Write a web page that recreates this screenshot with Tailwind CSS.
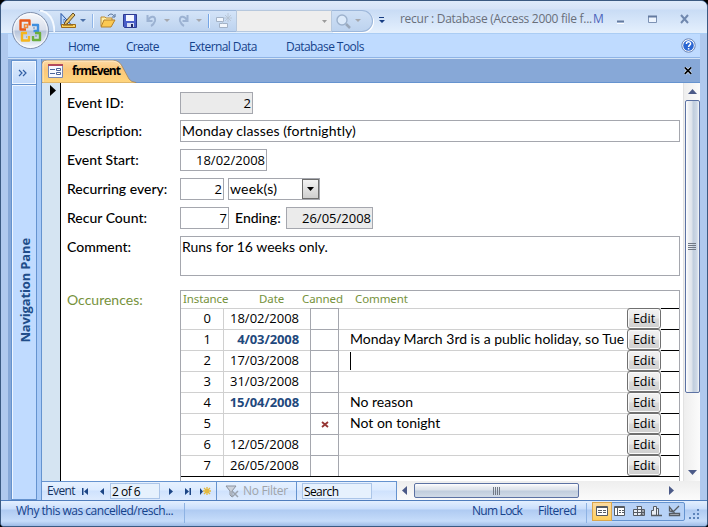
<!DOCTYPE html>
<html lang="en">
<head>
<meta charset="utf-8">
<title>recur : Database</title>
<script src="https://cdn.jsdelivr.net/npm/@tailwindcss/browser@4"></script>
</head>
<body class="bg-black overflow-hidden">
<div class="relative w-[708px] h-[527px] flex flex-col overflow-hidden rounded-t-[7px] rounded-b-[4px] border-x border-y border-[#3b5a82] bg-[#b0c9ee] font-['Open_Sans','Noto_Sans',sans-serif] text-[12px] whitespace-nowrap">

  <!-- Title bar -->
  <header class="h-[33px] shrink-0 flex items-start border-b border-[#abcdf4] bg-[linear-gradient(#dfebfb_0,#d5e3f8_8px,#c9dcf5_9px,#e3effd_31px)]">
    <div class="ml-[38px] mt-[9px] w-[164px] h-[22px] flex items-center border-y border-[#9db7da] bg-linear-to-b from-[#d4e4f8] to-[#bdd3ef] pl-[21px]">
      <svg class="w-[142px] h-[20px]" viewBox="60 11 142 20" fill="none">
        <path d="M61 13.500v12l10-1z" fill="#b9d6fa" stroke="#2452a5"/><path d="M64 19v4h4z" fill="#fff" stroke="#2452a5" stroke-width=".7"/>
        <path d="M65 22 73 13l2 2-8 9-3 1z" fill="#e9c469" stroke="#604b27"/>
        <path d="M61.500 24.500h14v3h-14z" fill="#ffd35a" stroke="#9a6a1d"/><path d="M64 25v1m2-1v1m2-1v1m2-1v1m2-1v1" stroke="#6e4a10"/>
        <path d="M80 19h6l-3 3z" fill="#4b70a8"/><path d="M92.500 14v14" stroke="#8fb5e8"/><path d="M93.500 14v14" stroke="#eef6ff"/>
        <path d="M101 26V17h4l1 1h6v3" fill="#fff0a8" stroke="#c08a2e"/><path d="M101 27l3-7h11l-4 7z" fill="#fbc952" stroke="#b5802a"/><path d="M108 16c2-3 5-2 6 0m1-2v3h-3" stroke="#4d6a94"/>
        <path d="M123.500 14.500h13v13h-12l-1-1z" fill="#4a5fc8" stroke="#2c3990"/><path d="M126 15h8v6h-8z" fill="#f3f6ff"/><path d="M127 23h7v4h-7z" fill="#d7def5"/><path d="M131 24h2v3h-2z" fill="#222b66"/>
        <path d="M147.500 15v6h5M148 20c3-5 8-4 7 1-1 3-2 4-4 5" stroke="#9cb2d2" stroke-width="2"/><path d="M164 19h6l-3 3z" fill="#a5a8ae"/>
        <path d="M187.500 15v6h-5M187 20c-3-5-8-4-7 1 1 3 2 4 4 5" stroke="#9cb2d2" stroke-width="2"/><path d="M196 19h6l-3 3z" fill="#a5a8ae"/>
      </svg>
    </div>
    <div class="mt-[9px] w-[33px] h-[22px] border-y border-[#9db7da] bg-linear-to-b from-[#d4e4f8] to-[#bdd3ef]">
      <svg class="w-[32px] h-[20px]" viewBox="203 11 32 20" fill="none"><path d="M208.500 14v14" stroke="#75a5e5"/><path d="M209.500 14v14" stroke="#eef6ff"/><path d="M216.500 17.500h7v4h-7zM219.500 23.500h8v4h-8z" fill="#f2f7fd" stroke="#a3b2c6"/><path d="M222.500 21v3M228 13v9m-4-4h8m-7-3 6 6m0-6-6 6" stroke="#b5c1d0" stroke-width=".8"/></svg>
    </div>
    <div class="mt-[9px] w-[96px] h-[22px] flex items-center justify-end border border-[#b7c8dd] bg-[#eeeeee] pr-[4px]"><svg class="w-[5px] h-[3px]" viewBox="0 0 5 3"><path d="M0 0h5L2.500 3z" fill="#9b9b9b"/></svg></div>
    <div class="mt-[9px] w-[41px] h-[22px] rounded-r-full border-y border-r border-[#9db7da] bg-linear-to-b from-[#cfe0f5] to-[#bdd3ef] shadow-[1px_1px_0_#fff]">
      <svg class="w-[36px] h-[20px]" viewBox="332 11 36 20" fill="none"><circle cx="342" cy="20" r="5" fill="#dceafa" stroke="#9db2cd" stroke-width="1.400"/><path d="m346 24 4 4" stroke="#9aa8ba" stroke-width="2.500"/><path d="M355 19h6l-3 3z" fill="#a5a8ae"/></svg>
    </div>
    <svg class="ml-[6px] mt-[16px] w-[6px] h-[7px]" viewBox="0 0 6 7"><path d="M0 0h5v1H0zM0 3h6L3 6z" fill="#183e83"/></svg>
    <div class="ml-[15px] mt-[10px] w-[191px] h-[16px] leading-[16px] text-[12px] tracking-[-0.28px] text-[#696f7a]">recur : Database (Access 2000 file f...</div>
    <div class="mt-[10px] ml-[2px] w-[12px] leading-[16px] text-[12px] text-[#4c64bb] overflow-hidden">M</div>
    <svg class="ml-[11px] mt-[12px] w-[74px] h-[12px]" viewBox="616 13 74 12" fill="none"><path d="M617 21.500h7" stroke="#647ba0" stroke-width="2"/><path d="M617 23.500h7" stroke="#fff"/><path d="M648.500 16.500h8v6h-8z" fill="#eef5fe" stroke="#7d92b4"/><path d="M648 16.500h9" stroke="#647ba0" stroke-width="2"/><path d="m681 15 7 8m0-8-7 8" stroke="#7189af" stroke-width="2"/></svg>
  </header>

  <!-- Ribbon tabs -->
  <nav class="h-[24px] shrink-0 ml-[7px] mr-[7px] flex items-center bg-[#bfdbff] border-b border-[#8fb4e5] text-[12px] leading-[16px] text-[#15428b] relative">
    <span class="ml-[60px] mt-[2px] w-[58px] tracking-[-0.7px]">Home</span>
    <span class="mt-[2px] w-[63px] tracking-[-0.7px]">Create</span>
    <span class="mt-[2px] w-[97px] tracking-[-0.58px]">External Data</span>
    <span class="mt-[2px] tracking-[-0.56px]">Database Tools</span>
    <svg class="ml-auto mr-[4px] w-[15px] h-[15px]" viewBox="0 0 15 15"><circle cx="7.500" cy="7.500" r="6.700" fill="#fff" stroke="#6782b4"/><circle cx="7.500" cy="7.500" r="5.300" fill="#2b66d2"/><path d="M5.400 6c0-3 4.200-2.800 4.200-.3 0 1.400-2 1.500-2 3.200M7.600 10v1.600" fill="none" stroke="#fff" stroke-width="1.500"/></svg>
  </nav>

  <!-- Workspace -->
  <div class="flex h-[442px] shrink-0 ml-[7px] mr-[7px] bg-[#87a8d7] border-t border-[#d3e3f6]">
    <aside class="ml-[3px] w-[26px] shrink-0 mt-px border border-[#6593cf] bg-[#c0dbff] flex flex-col">
      <div class="h-[24px] flex items-center justify-center border-b border-[#6593cf] bg-linear-to-b from-[#dceafc] to-[#c2dafb] shadow-[inset_0_0_0_1px_#eff6ff]">
        <svg class="w-[9px] h-[8px] mr-[3px]" viewBox="0 0 9 8"><path d="m1 1 3 3-3 3M5 1l3 3-3 3" fill="none" stroke="#3360a5" stroke-width="1.200"/></svg>
      </div>
      <div class="flex-1 flex items-center justify-center border-l border-t border-[#eff6ff]">
        <span class="[writing-mode:vertical-rl] rotate-180 text-[13px] leading-[18px] font-bold tracking-[-0.15px] text-[#204d89] mb-[4px]">Navigation Pane</span>
      </div>
    </aside>
    <div class="w-[4px] shrink-0 bg-[#a9cbf8]"></div>
    <section class="w-[659px] flex flex-col border-l border-[#6593cf]">
      <div class="h-[24px] shrink-0 flex border-b border-[#6593cf]">
        <div class="relative w-[96px] h-[24px]">
          <svg class="absolute left-0 top-0 w-[96px] h-[24px]" viewBox="0 0 96 24"><defs><linearGradient id="tab" x2="0" y2="1"><stop offset="0" stop-color="#fcd9a3"/><stop offset=".4" stop-color="#fbc77b"/><stop offset="1" stop-color="#ffd67c"/></linearGradient></defs><path d="M0 24V5Q0 1.500 4 1.500H71Q77 1.500 80 7L87 20Q89 23 94 23.500V24z" fill="url(#tab)" stroke="#a37f50" stroke-width=".7"/><path d="M1 23V5q0-3 4-3H71q5 0 8 5" fill="none" stroke="#ffe9c6"/>
            <path d="M6.500 5.500h14v13h-14z" fill="#f7f9ff" stroke="#7987b2"/><path d="M6 6h15" stroke="#b24a5d" stroke-width="2"/><path d="M8 10.500h5m-5 4h5" stroke="#4d659b"/><path d="M14.500 9.500h4v2h-4zM14.500 13.500h4v2h-4z" fill="#fff" stroke="#4d659b"/></svg>
          <span class="absolute left-[30px] top-[4px] text-[12px] leading-[16px] font-bold tracking-[-0.95px] text-black">frmEvent</span>
        </div>
        <svg class="ml-auto mr-[8px] mt-[8px] w-[8px] h-[8px]" viewBox="0 0 8 8"><path d="m.8.500 6.400 6.400m0-6.400L.8 6.900" stroke="#d8e5f7" stroke-width="3"/><path d="m.8.500 6.400 6.400m0-6.400L.8 6.900" stroke="#000" stroke-width="1.700"/></svg>
      </div>

      <div class="h-[398px] shrink-0 flex bg-white">
        <div class="w-[19px] shrink-0 border-r border-black bg-[#d5e4f2] pl-[8px] pt-[2px]"><svg class="w-[6px] h-[11px]" viewBox="0 0 6 11"><path d="M0 0l6 5.500L0 11z"/></svg></div>

        <!-- Form -->
        <main class="w-[622px] pl-[6px] pt-[9px] overflow-hidden font-['Lato','Noto_Sans',sans-serif] text-[14px] leading-[20px] text-black">
          <div class="flex h-[22px] mb-[6px]"><span class="w-[113px] leading-[22px] font-medium">Event ID:</span><span class="w-[73px] border border-[#a5a7ae] bg-[#ebebeb] text-right pr-[1px] font-['Open_Sans',sans-serif] text-[13px]">2</span></div>
          <div class="flex h-[22px] mb-[7px]"><span class="w-[113px] leading-[22px] font-medium">Description:</span><span class="w-[500px] border border-[#a5a7ae] pl-[1px] tracking-[0.1px]">Monday classes (fortnightly)</span></div>
          <div class="flex h-[22px] mb-[7px]"><span class="w-[113px] leading-[22px] font-medium">Event Start:</span><span class="w-[87px] border border-[#a5a7ae] text-right pr-[1px] font-['Open_Sans',sans-serif] text-[13px]">18/02/2008</span></div>
          <div class="flex h-[22px] mb-[7px]"><span class="w-[113px] leading-[22px] font-medium">Recurring every:</span><span class="w-[44px] mr-[4px] border border-[#a5a7ae] text-right pr-[1px] font-['Open_Sans',sans-serif] text-[13px]">2</span>
            <span class="w-[92px] border border-[#a5a7ae] pl-[1px] flex justify-between"><span class="tracking-[0.2px]">week(s)</span><span class="w-[17px] h-[20px] border border-[#6d6d6d] bg-linear-to-b from-[#f3f3f3] to-[#cfcfcf] flex items-center justify-center"><svg class="w-[7px] h-[4px]" viewBox="0 0 7 4"><path d="M0 0h7L3.500 4z"/></svg></span></span></div>
          <div class="flex h-[22px] mb-[7px]"><span class="w-[113px] leading-[22px] font-medium">Recur Count:</span><span class="w-[49px] border border-[#a5a7ae] text-right pr-[1px] font-['Open_Sans',sans-serif] text-[13px]">7</span><span class="w-[57px] pl-[6px] leading-[22px] font-medium">Ending:</span><span class="w-[87px] border border-[#a5a7ae] bg-[#ebebeb] text-right pr-[1px] font-['Open_Sans',sans-serif] text-[13px]">26/05/2008</span></div>
          <div class="flex h-[40px] mb-[14px]"><span class="w-[113px] leading-[22px] font-medium">Comment:</span><span class="w-[500px] border border-[#a5a7ae] pl-[1px]">Runs for 16 weeks only.</span></div>
          <div class="flex h-[192px]"><span class="w-[113px] text-[#76923c]">Occurences:</span>
            <div class="w-[500px] border-x border-t border-[#a5a7ae]">
              <div class="h-[17px] flex pl-[2px] text-[11.500px] leading-[15px] tracking-[-0.1px] text-[#76923c] font-['Noto_Sans',sans-serif]"><span class="w-[76px]">Instance</span><span class="w-[43px]">Date</span><span class="w-[53px]">Canned</span><span>Comment</span></div>
              <div id="rows" class="border-b border-black"></div>
            </div>
          </div>
        </main>

        <!-- Vertical scroll bar -->
        <div class="w-[17px] shrink-0 border-l border-[#e2e2e2] bg-linear-to-r from-[#eeeeee] to-[#fbfbfb] flex flex-col items-center">
          <svg class="mt-[6px] w-[9px] h-[5px]" viewBox="0 0 9 5"><path d="M4.500 0 9 5H0z" fill="#4b5a88"/></svg>
          <div class="mt-[6px] h-[293px] w-[15px] rounded-[2px] border border-[#5c72a3] bg-[linear-gradient(90deg,#fff_0,#e9ecf1_3px,#dde3eb_6px,#c0cddd_7px,#cfd9e6_11px,#f7f9fb_13px)] flex items-center justify-center"><svg class="w-[8px] h-[8px]" viewBox="0 0 8 8"><path d="M0 .5h8m-8 2h8m-8 2h8m-8 2h8" stroke="#717985" stroke-width="1"/></svg></div>
          <svg class="mt-auto mb-[6px] w-[9px] h-[5px]" viewBox="0 0 9 5"><path d="M0 0h9L4.500 5z" fill="#4b5a88"/></svg>
        </div>
      </div>

      <!-- Record navigation -->
      <div class="h-[19px] shrink-0 flex bg-[#f4f4f4]">
        <div class="w-[355px] flex items-center border-r border-t border-[#6593cf] bg-[linear-gradient(#e6f1ff_0,#dcebff_8px,#cfe2fd_9px,#dceafe_17px)] text-[12px] leading-[16px] text-[#15325f]">
          <span class="ml-[5px] w-[34px] tracking-[-0.6px]">Event</span>
          <svg class="w-[24px] h-[9px]" viewBox="81 486 24 9"><path d="M82 487h1.500v7H82zM88 487v7l-4-3.500zM104 487v7l-4-3.500z" fill="#1c4585"/></svg>
          <span class="ml-[5px] w-[50px] h-[16px] border border-[#abc5e8] bg-[#e6f1fd] text-black leading-[15px] pl-[1px] tracking-[-0.5px]">2 of 6</span>
          <svg class="ml-[8px] w-[44px] h-[9px]" viewBox="168 486 44 9"><path d="M169 487v7l4-3.500zM185 487v7l4-3.500zM189.500 487h1.500v7h-1.500zM200 487v7l3-3.500z" fill="#1c4585"/><path d="M207 486v8m-4-4h8m-7-3 6 6m0-6-6 6" stroke="#e4b93c" stroke-width="1.300"/></svg>
          <div class="ml-[4px] w-[81px] h-full flex items-center border-x border-[#6593cf] text-[#a0a4a9]">
            <svg class="ml-[8px] w-[14px] h-[13px]" viewBox="0 0 14 13"><path d="M1 1h10L7 6v6l-2-2V6z" fill="#cdd3dc" stroke="#8a929f"/><path d="m7 6 6 6m0-6-6 6" stroke="#9aa2ae" stroke-width="1.500"/></svg>
            <span class="ml-[4px] tracking-[-0.3px]">No Filter</span>
          </div>
          <span class="ml-[5px] w-[70px] h-[16px] border border-[#abc5e8] bg-[#e6f1fd] text-black leading-[15px] pl-[1px] tracking-[-0.6px]">Search</span>
        </div>
        <div class="flex-1 flex items-center bg-linear-to-b from-[#eeeeee] to-[#fbfbfb]">
          <svg class="ml-[5px] w-[5px] h-[9px]" viewBox="0 0 5 9"><path d="M5 0v9L0 4.500z" fill="#4b5a88"/></svg>
          <div class="ml-[7px] w-[165px] h-[15px] rounded-[2px] border border-[#5c72a3] bg-[linear-gradient(#fff_0,#e9ecf1_3px,#dde3eb_6px,#c0cddd_7px,#cfd9e6_12px)] flex items-center justify-center"><svg class="w-[8px] h-[8px]" viewBox="0 0 8 8"><path d="M.5 0v8m2-8v8m2-8v8m2-8v8" stroke="#717985"/></svg></div>
          <svg class="ml-auto mr-[26px] w-[5px] h-[9px]" viewBox="0 0 5 9"><path d="M0 0v9l5-4.500z" fill="#4b5a88"/></svg>
        </div>
      </div>
    </section>
  </div>

  <!-- Status bar -->
  <footer class="flex-1 flex items-start border-t border-[#4f7dbd] bg-[linear-gradient(#e3efff_0,#c9defc_8px,#afcbf2_9px,#c6dcfa_20px,#9dbbe6_25px)] text-[12px] leading-[16px] text-[#15428b]">
    <span class="ml-[15px] mt-[2px] w-[169px] h-[20px] border-r border-[#8db2e3] tracking-[-0.5px]">Why this was cancelled/resch...</span>
    <span class="ml-auto mt-[2px] w-[66px] tracking-[-0.75px]">Num Lock</span>
    <span class="mt-[2px] w-[49px] h-[20px] tracking-[-0.5px] border-r border-[#8db2e3]">Filtered</span>
    <div class="ml-[5px] mr-[22px] mt-px w-[93px] h-[19px] flex border border-[#6593cf] rounded-[2px] bg-[#b7d2f7]">
      <div class="w-[18px] h-[17px] bg-linear-to-b from-[#fbdba0] to-[#ffcf5a] shadow-[0_0_0_1px_#d9a64e]"></div>
    </div>
    <svg class="absolute left-[594px] top-[502px] w-[110px] h-[22px]" viewBox="595 502 110 22" fill="none">
      <path d="M596.500 505.500h11v9h-11z" fill="#fff" stroke="#555b63"/><path d="M596 506.500h12" stroke="#555b63"/><path d="M598 509.500h4m-4 2h4m1-2h3m-3 2h3" stroke="#555b63"/>
      <path d="M614.500 505.500h10v9h-10z" fill="#fff" stroke="#555b63"/><path d="M614 506.500h11M617.500 507v7" stroke="#555b63" /><path d="M619 509.500h2m1 0h2m-5 2h2m1 0h2" stroke="#555b63"/>
      <path d="M636.500 505.500h5v9h-8v-6h11v6h-3m-8-3h11m-7-6v9" stroke="#555b63" fill="#e8edf4"/><path d="m641 510 2-2 2 2m-2-2v6h-3" stroke="#555b63"/>
      <path d="M651.500 514.500v-5h2v-4h3v9zM656.500 514.500v-7h2v7h2.500" stroke="#555b63" fill="#e8edf4"/><path d="M651 514.500h11" stroke="#555b63" stroke-width="1.500"/>
      <path d="M669.500 506v4l4 1zM673 511l6-6M669.500 514.500h10v-2h-10z" stroke="#555b63" fill="#e8edf4" stroke-width="1.300"/>
      <g fill="#5c83b9"><path d="M697 508h2v2h-2zM693 512h2v2h-2zM697 512h2v2h-2zM689 516h2v2h-2zM693 516h2v2h-2zM697 516h2v2h-2z"/></g>
    </svg>
  </footer>

  <!-- Office button -->
  <svg class="absolute left-[10px] top-[9px] w-[40px] h-[41px]" viewBox="11 10 40 41" fill="none">
    <defs><linearGradient id="orb" x2="0" y2="1"><stop offset="0" stop-color="#f6f8fc"/><stop offset=".48" stop-color="#d9dfeb"/><stop offset=".52" stop-color="#b7c4da"/><stop offset="1" stop-color="#f7fbff"/></linearGradient></defs>
    <circle cx="30.500" cy="30.500" r="18" fill="url(#orb)" stroke="#7f8fac"/><circle cx="30.500" cy="30.500" r="16.700" stroke="#fff" stroke-opacity=".7"/>
    <g stroke-width="2.400" stroke-linejoin="round"><path d="M26 29.500h-5.500v-9h9v5" stroke="#e8591a"/><path d="M32 25h6v6h-4.500" stroke="#3f8fdf"/><path d="M27 33h-5v7.500h7V36" stroke="#f5b51e"/><path d="M33 36v4h7v-7h-5" stroke="#6cae3c"/></g>
    <path d="M24.500 24.500h3v3h-3z" stroke="#f08a3c" stroke-width="1.500"/><path d="M33 28h2m-9 9h1m8-1h2" stroke="#8ea8c8" stroke-width="1.500"/>
  </svg>
  <svg class="absolute left-[38px] top-[9px] w-[16px] h-[23px]" viewBox="0 0 16 23" fill="none"><path d="M1 .5C10 2 15 10 15.500 22" stroke="#f4f9ff" stroke-width="2"/></svg>
</div>

<template id="row">
  <div class="flex h-[21px] border-t border-[#d0d0d0] leading-[18px]">
    <span class="w-[43px] h-[20px] border-r border-[#d0d0d0] text-right pr-[12px] font-['Open_Sans',sans-serif] text-[13px]"></span>
    <span class="w-[86px] text-right pr-[11px] font-['Open_Sans',sans-serif] text-[13px]"></span>
    <span class="w-[29px] h-[21px] -mt-px border border-b-0 border-[#a5a7ae] flex items-center justify-center"></span>
    <span class="w-[282px] mr-[3px] ml-[3px] pl-[8px] overflow-hidden"></span>
    <span class="w-[34px] h-[21px] -mt-px border border-[#707070] rounded-[3px] bg-[linear-gradient(#f2f2f2_0,#e9e9e9_9px,#dadada_10px,#cfcfcf_19px)] shadow-[inset_0_0_0_1px_#fafafa] text-center leading-[19px] font-['Open_Sans',sans-serif] text-[12.500px]">Edit</span>
    <span class="w-[18px] h-px -mt-px bg-black"></span>
  </div>
</template>
<script>
  const data = [
    ['0', '18/02/2008', ''], ['1', '4/03/2008', 'Monday March 3rd is a public holiday, so Tues', 1],
    ['2', '17/03/2008', '|'], ['3', '31/03/2008', ''], ['4', '15/04/2008', 'No reason', 1],
    ['5', '', 'Not on tonight', 0, 1], ['6', '12/05/2008', ''], ['7', '26/05/2008', '']
  ];
  const bold = "font-bold tracking-[-0.1px] text-[#1f497d]";
  for (const [n, date, note, moved, canned] of data) {
    const row = document.getElementById('row').content.cloneNode(true);
    const c = row.querySelectorAll('span');
    c[0].textContent = n;
    c[1].textContent = date;
    if (moved) c[1].className += ' ' + bold;
    if (canned) c[2].innerHTML = '<svg class="w-[8px] h-[7px]" viewBox="0 0 8 7"><path d="M1 1l6 5M7 1 1 6" stroke="#963634" stroke-width="1.800"/></svg>';
    if (note === '|') c[3].innerHTML = '<i class="block w-px h-[18px] mt-px bg-black"></i>';
    else c[3].textContent = note;
    document.getElementById('rows').append(row);
  }
</script>
</body>
</html>
